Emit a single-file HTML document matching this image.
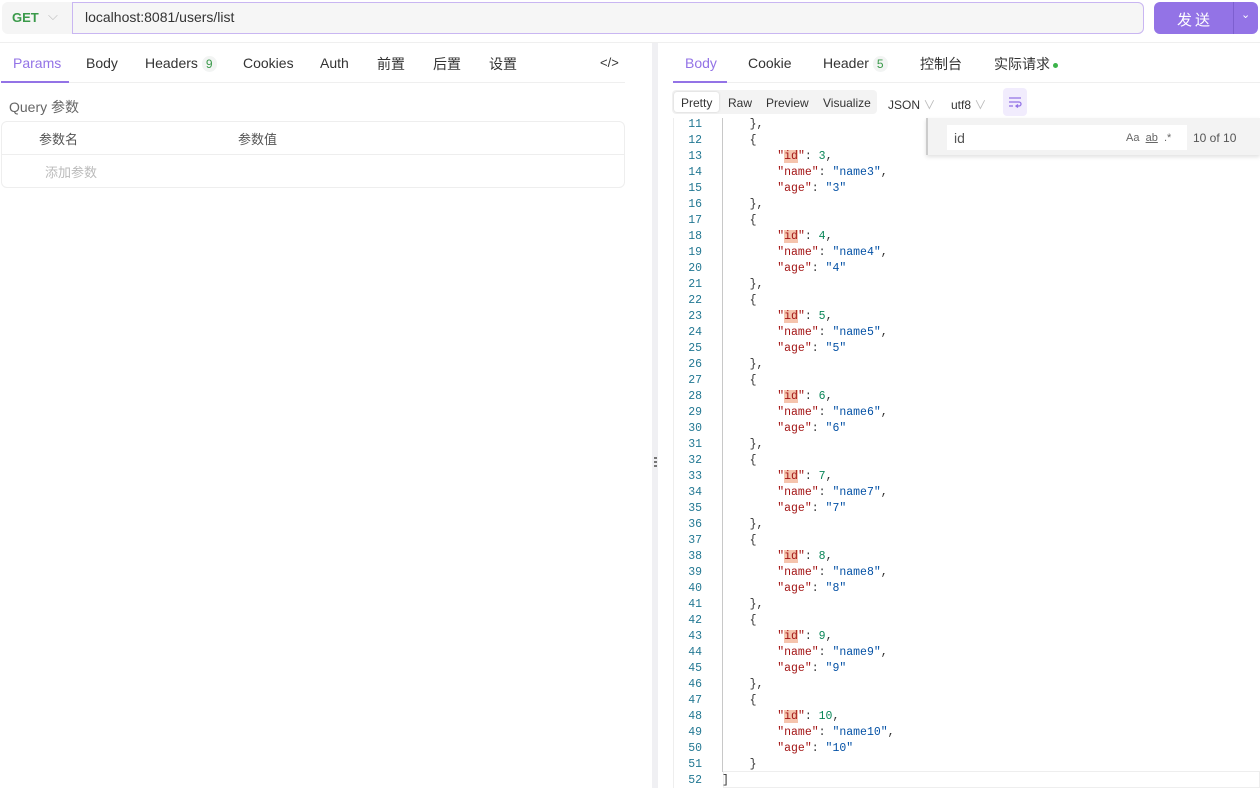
<!DOCTYPE html>
<html><head><meta charset="utf-8"><style>
*{box-sizing:border-box;margin:0;padding:0}
body{width:1260px;height:788px;overflow:hidden;background:#fff;font-family:"Liberation Sans","Noto Sans CJK SC",sans-serif;color:#333;position:relative;font-size:13px}
.a{position:absolute;white-space:nowrap}
.tab{position:absolute;top:55px;font-size:14px;color:#333}
.badge{display:inline-block;background:#f2f4f3;color:#3a9a4a;font-size:12px;border-radius:8px;padding:0 4px;margin-left:4px;line-height:16px}
.code{position:absolute;left:0;top:0;font-family:"Liberation Mono",monospace;font-size:11.5px;line-height:16px}
.ln{position:absolute;left:676px;width:26px;text-align:right;color:#237893}
.tx{position:absolute;left:722px;color:#333;white-space:pre}
.k{color:#a31515}.s{color:#0451a5}.n{color:#098658}
.h{background:#f5c4ad}
</style></head><body>
<div class="a" style="left:2px;top:2px;width:1142px;height:32px;background:#f5f5f5;border-radius:6px"></div>
<div class="a" style="left:12px;top:10px;font-weight:bold;color:#3a9a4a;font-size:13px">GET</div>
<div class="a" style="left:48px;top:8px;color:#bbb;font-size:13px">⌵</div>
<div class="a" style="left:72px;top:2px;width:1072px;height:32px;border:1px solid #c9b6f2;border-radius:0 6px 6px 0;background:#f6f6f6"></div>
<div class="a" style="left:85px;top:9px;font-size:14px;color:#333">localhost:8081/users/list</div>
<div class="a" style="left:1154px;top:2px;width:104px;height:32px;background:#9373e6;border-radius:6px"></div>
<div class="a" style="left:1233px;top:2px;width:1px;height:32px;background:#7d5fd0"></div>
<div class="a" style="left:1177px;top:9px;color:#fff;font-size:15px;letter-spacing:3px">发送</div>
<div class="a" style="left:1241px;top:8px;color:#fff;font-size:11px">⌄</div>
<div class="a" style="left:0;top:42px;width:1260px;height:1px;background:#efefef"></div>
<div class="tab" style="left:13px;color:#9373e6">Params</div>
<div class="a" style="left:1px;top:81px;width:68px;height:2px;background:#9373e6"></div>
<div class="a" style="left:69px;top:82px;width:556px;height:1px;background:#efefef"></div>
<div class="tab" style="left:86px">Body</div>
<div class="tab" style="left:145px">Headers<span class="badge">9</span></div>
<div class="tab" style="left:243px">Cookies</div>
<div class="tab" style="left:320px">Auth</div>
<div class="tab" style="left:377px;top:54px">前置</div>
<div class="tab" style="left:433px;top:54px">后置</div>
<div class="tab" style="left:489px;top:54px">设置</div>
<div class="tab" style="left:600px;font-size:13px">&lt;/&gt;</div>
<div class="a" style="left:9px;top:97px;font-size:14px;color:#666">Query 参数</div>
<div class="a" style="left:1px;top:121px;width:624px;height:67px;border:1px solid #eee;border-radius:6px"></div>
<div class="a" style="left:1px;top:154px;width:624px;height:1px;background:#eee"></div>
<div class="a" style="left:39px;top:129px;color:#555;font-size:13px">参数名</div>
<div class="a" style="left:238px;top:129px;color:#555;font-size:13px">参数值</div>
<div class="a" style="left:45px;top:162px;color:#bbb;font-size:13px">添加参数</div>
<div class="a" style="left:652px;top:43px;width:6px;height:745px;background:#f0f0f3"></div>
<div class="a" style="left:654px;top:457px;width:3px;height:2px;background:#777"></div>
<div class="a" style="left:654px;top:461px;width:3px;height:2px;background:#777"></div>
<div class="a" style="left:654px;top:465px;width:3px;height:2px;background:#777"></div>
<div class="tab" style="left:685px;color:#9373e6">Body</div>
<div class="a" style="left:673px;top:81px;width:54px;height:2px;background:#9373e6"></div>
<div class="a" style="left:727px;top:82px;width:533px;height:1px;background:#efefef"></div>
<div class="tab" style="left:748px">Cookie</div>
<div class="tab" style="left:823px">Header<span class="badge">5</span></div>
<div class="tab" style="left:920px;top:54px">控制台</div>
<div class="tab" style="left:994px;top:54px">实际请求<span style="display:inline-block;width:5px;height:5px;border-radius:50%;background:#3bb34a;margin-left:3px;vertical-align:middle"></span></div>
<div class="a" style="left:672px;top:90px;width:205px;height:24px;background:#f3f3f3;border-radius:4px"></div>
<div class="a" style="left:674px;top:92px;width:45px;height:20px;background:#fff;border-radius:3px;box-shadow:0 0 2px #ccc"></div>
<div class="a" style="left:681px;top:96px;font-size:12px">Pretty</div>
<div class="a" style="left:728px;top:96px;font-size:12px">Raw</div>
<div class="a" style="left:766px;top:96px;font-size:12px">Preview</div>
<div class="a" style="left:823px;top:96px;font-size:12px">Visualize</div>
<div class="a" style="left:888px;top:96px;font-size:12px">JSON <span style="color:#bbb">∨</span></div>
<div class="a" style="left:951px;top:96px;font-size:12px">utf8 <span style="color:#bbb">∨</span></div>
<div class="a" style="left:1003px;top:88px;width:24px;height:28px;background:#f1ecfd;border-radius:4px"></div>
<svg class="a" style="left:1007px;top:94px" width="16" height="16" viewBox="0 0 16 16"><path d="M2 4h12M2 8h10a2 2 0 0 1 0 4H9M11 10.5 9 12l2 1.5M2 12h4" stroke="#9373e6" stroke-width="1.3" fill="none"/></svg>
<div class="a" style="left:673px;top:118px;width:1px;height:670px;background:#eee"></div>
<div class="a" style="left:722px;top:118px;width:1px;height:654px;background:#c8c8c8"></div>
<div class="a" style="left:723px;top:771px;width:537px;height:17px;border:1px solid #eee"></div>
<div class="a" style="left:0;top:118px;width:1260px;height:670px;overflow:hidden">
<div class="code" style="top:-1px">
<div class="ln" style="top:0">11</div><div class="ln" style="top:16px">12</div><div class="ln" style="top:32px">13</div><div class="ln" style="top:48px">14</div><div class="ln" style="top:64px">15</div><div class="ln" style="top:80px">16</div><div class="ln" style="top:96px">17</div><div class="ln" style="top:112px">18</div><div class="ln" style="top:128px">19</div><div class="ln" style="top:144px">20</div><div class="ln" style="top:160px">21</div><div class="ln" style="top:176px">22</div><div class="ln" style="top:192px">23</div><div class="ln" style="top:208px">24</div><div class="ln" style="top:224px">25</div><div class="ln" style="top:240px">26</div><div class="ln" style="top:256px">27</div><div class="ln" style="top:272px">28</div><div class="ln" style="top:288px">29</div><div class="ln" style="top:304px">30</div><div class="ln" style="top:320px">31</div><div class="ln" style="top:336px">32</div><div class="ln" style="top:352px">33</div><div class="ln" style="top:368px">34</div><div class="ln" style="top:384px">35</div><div class="ln" style="top:400px">36</div><div class="ln" style="top:416px">37</div><div class="ln" style="top:432px">38</div><div class="ln" style="top:448px">39</div><div class="ln" style="top:464px">40</div><div class="ln" style="top:480px">41</div><div class="ln" style="top:496px">42</div><div class="ln" style="top:512px">43</div><div class="ln" style="top:528px">44</div><div class="ln" style="top:544px">45</div><div class="ln" style="top:560px">46</div><div class="ln" style="top:576px">47</div><div class="ln" style="top:592px">48</div><div class="ln" style="top:608px">49</div><div class="ln" style="top:624px">50</div><div class="ln" style="top:640px">51</div><div class="ln" style="top:656px">52</div>
<div class="tx" style="top:0">    },
    {
        <span class="k">"<span class="h">id</span>"</span>: <span class="n">3</span>,
        <span class="k">"name"</span>: <span class="s">"name3"</span>,
        <span class="k">"age"</span>: <span class="s">"3"</span>
    },
    {
        <span class="k">"<span class="h">id</span>"</span>: <span class="n">4</span>,
        <span class="k">"name"</span>: <span class="s">"name4"</span>,
        <span class="k">"age"</span>: <span class="s">"4"</span>
    },
    {
        <span class="k">"<span class="h">id</span>"</span>: <span class="n">5</span>,
        <span class="k">"name"</span>: <span class="s">"name5"</span>,
        <span class="k">"age"</span>: <span class="s">"5"</span>
    },
    {
        <span class="k">"<span class="h">id</span>"</span>: <span class="n">6</span>,
        <span class="k">"name"</span>: <span class="s">"name6"</span>,
        <span class="k">"age"</span>: <span class="s">"6"</span>
    },
    {
        <span class="k">"<span class="h">id</span>"</span>: <span class="n">7</span>,
        <span class="k">"name"</span>: <span class="s">"name7"</span>,
        <span class="k">"age"</span>: <span class="s">"7"</span>
    },
    {
        <span class="k">"<span class="h">id</span>"</span>: <span class="n">8</span>,
        <span class="k">"name"</span>: <span class="s">"name8"</span>,
        <span class="k">"age"</span>: <span class="s">"8"</span>
    },
    {
        <span class="k">"<span class="h">id</span>"</span>: <span class="n">9</span>,
        <span class="k">"name"</span>: <span class="s">"name9"</span>,
        <span class="k">"age"</span>: <span class="s">"9"</span>
    },
    {
        <span class="k">"<span class="h">id</span>"</span>: <span class="n">10</span>,
        <span class="k">"name"</span>: <span class="s">"name10"</span>,
        <span class="k">"age"</span>: <span class="s">"10"</span>
    }
]</div>
</div>
</div>
<div class="a" style="left:926px;top:118px;width:334px;height:37px;background:#f3f3f3;border-left:2px solid #ccc;box-shadow:0 2px 4px rgba(0,0,0,.12)"></div>
<div class="a" style="left:947px;top:125px;width:240px;height:25px;background:#fff"></div>
<div class="a" style="left:954px;top:130px;font-size:14px;color:#555">id</div>
<div class="a" style="left:1126px;top:132px;font-size:11px;color:#666">Aa&nbsp; <u>ab</u>&nbsp; .*</div>
<div class="a" style="left:1193px;top:131px;font-size:12px;color:#555">10 of 10</div>
</body></html>
